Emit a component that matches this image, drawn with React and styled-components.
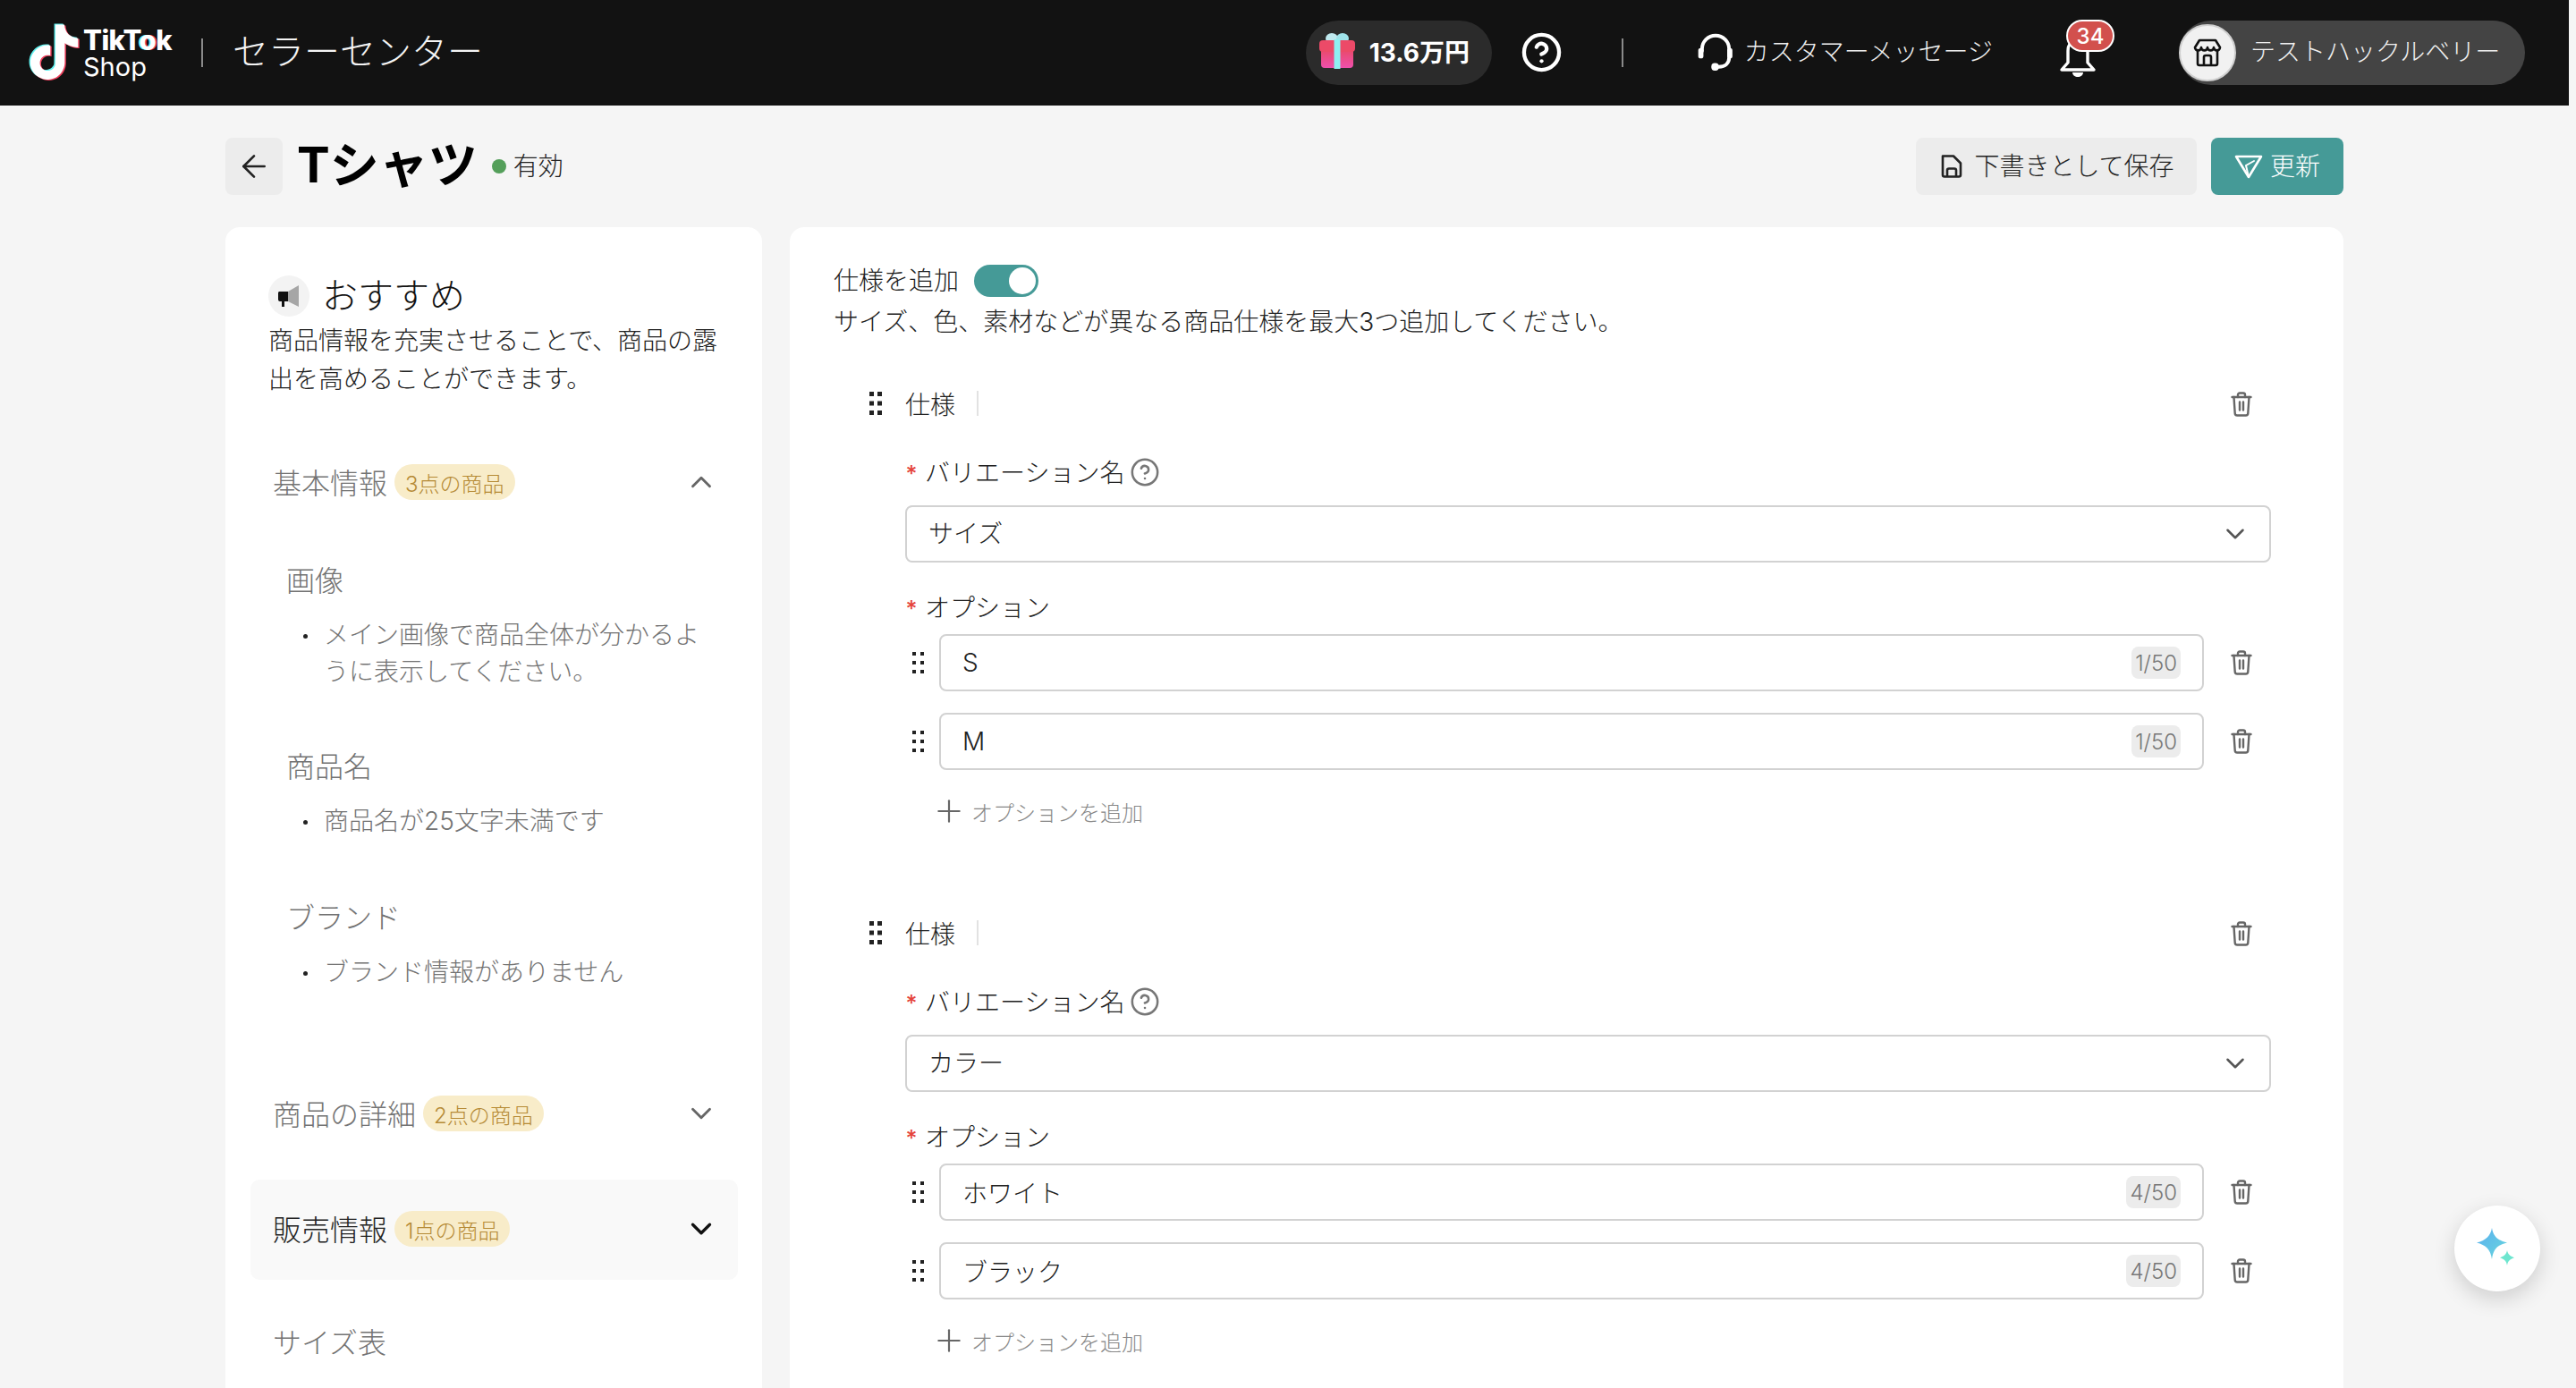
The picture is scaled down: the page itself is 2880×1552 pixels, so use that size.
import React from "react";
import styled, { createGlobalStyle } from "styled-components";
import { ArrowLeft, ChevronDown, ChevronUp, CircleHelp, Plus } from "lucide-react";

const Global = createGlobalStyle`
  html, body { margin: 0; padding: 0; background: #f5f5f5; overflow: hidden; }
  * { box-sizing: border-box; }
  body { font-family: Inter, "Noto Sans CJK JP", sans-serif; color: #222; }
`;

const Root = styled.div`
  position: relative;
  width: 2880px;
  height: 1552px;
  overflow: hidden;
  background: #f5f5f5;
`;

/* lifts fallback-font text up to the optical centre of its row */
const Lifted = styled.span`
  padding-bottom: ${(p) => p.$by}px;
`;

/* ---------- header ---------- */
const Header = styled.header`
  width: 2872px;
  height: 118px;
  background: #121212;
  color: #fff;
  display: flex;
  align-items: center;
  padding: 0 49px 0 28px;
`;
const Logo = styled.div`
  display: flex;
  align-items: center;
  gap: 1px;
`;
const LogoWords = styled.div`
  display: flex;
  flex-direction: column;
`;
const LogoTop = styled.span`
  font-size: 31px;
  font-weight: 800;
  letter-spacing: -0.6px;
  line-height: 31px;
`;
const LogoO = styled.span`
  text-shadow: -1.5px 0 #5ff0ee, 1.5px 0 #ee3f5c;
`;
const LogoBottom = styled.span`
  font-size: 29px;
  font-weight: 400;
  line-height: 30px;
`;
const VRule = styled.span`
  width: 2px;
  height: 32px;
  background: #8a8a8a;
  margin-left: ${(p) => p.$ml}px;
  flex: none;
`;
const CenterName = styled.span`
  font-size: 40px;
  font-weight: 300;
  margin-left: 33px;
  color: #f4f4f4;
  padding-bottom: 8px;
`;
const GiftPill = styled.div`
  margin-left: auto;
  width: 208px;
  height: 72px;
  border-radius: 36px;
  background: #2b2b2b;
  display: flex;
  align-items: center;
  padding: 0 0 5px 14px;
  gap: 15px;
  font-size: 28px;
  font-weight: 700;
`;
const HelpSlot = styled.div`
  margin: 0 0 2px 32px;
  display: flex;
  color: #fff;
`;
const Support = styled.div`
  margin-left: 80px;
  display: flex;
  align-items: center;
  gap: 10px;
  padding-bottom: 2px;
  font-size: 28px;
  font-weight: 300;
  color: #f0f0f0;
`;
const BellWrap = styled.div`
  position: relative;
  margin-left: 74px;
  margin-right: 92px;
  display: flex;
  padding-top: 8px;
`;
const BellBadge = styled.span`
  position: absolute;
  left: 8px;
  top: -9px;
  width: 54px;
  height: 36px;
  border-radius: 18px;
  border: 2px solid #fff;
  background: #d2504d;
  color: #fff;
  font-size: 24px;
  font-weight: 500;
  display: flex;
  align-items: center;
  justify-content: center;
`;
const ShopPill = styled.div`
  width: 387px;
  height: 72px;
  border-radius: 36px;
  background: #444;
  display: flex;
  align-items: center;
  gap: 16px;
  font-size: 28px;
  font-weight: 300;
  color: #f0f0f0;
`;
const ShopCircle = styled.span`
  width: 64px;
  height: 64px;
  border-radius: 50%;
  background: #f1f1f1;
  border: 2px solid #cfcfcf;
  display: flex;
  align-items: center;
  justify-content: center;
  flex: none;
`;

/* ---------- title bar ---------- */
const TitleBar = styled.div`
  margin: 36px 0 36px 252px;
  width: 2368px;
  height: 64px;
  display: flex;
  align-items: center;
`;
const BackBtn = styled.button`
  width: 64px;
  height: 64px;
  border: 0;
  border-radius: 8px;
  background: #ececec;
  color: #222;
  display: flex;
  align-items: center;
  justify-content: center;
  padding: 0;
`;
const Title = styled.h1`
  margin: 0 0 0 16px;
  font-size: 55px;
  font-weight: 700;
  color: #000;
  line-height: 60px;
  padding-bottom: 4px;
`;
const StatusDot = styled.span`
  width: 16px;
  height: 16px;
  border-radius: 50%;
  background: #549f5a;
  margin-left: 16px;
  margin-right: 8px;
`;
const StatusText = styled.span`
  font-size: 28px;
  font-weight: 300;
  color: #222;
  padding-bottom: 4px;
`;
const Actions = styled.div`
  margin-left: auto;
  display: flex;
  gap: 16px;
`;
const ActionBtn = styled.button`
  height: 64px;
  width: ${(p) => p.$w}px;
  border: 0;
  border-radius: 8px;
  background: ${(p) => (p.$primary ? "#459a97" : "#ececec")};
  color: ${(p) => (p.$primary ? "#fff" : "#222")};
  font-family: inherit;
  font-size: 28px;
  font-weight: 300;
  display: flex;
  align-items: center;
  justify-content: center;
  gap: ${(p) => (p.$primary ? 8 : 12)}px;
  padding: 0 0 0 ${(p) => (p.$primary ? 0 : 2)}px;
`;

/* ---------- panels ---------- */
const Columns = styled.div`
  margin-left: 252px;
  width: 2368px;
  display: grid;
  grid-template-columns: 600px 1737px;
  gap: 31px;
  align-items: start;
`;
const SidePanel = styled.aside`
  background: #fff;
  border-radius: 16px;
  height: 1400px;
  padding-top: 54px;
`;
const AdviceHead = styled.div`
  margin-left: 48px;
  height: 46px;
  display: flex;
  align-items: center;
  gap: 14px;
  font-size: 40px;
  font-weight: 300;
  color: #111;
`;
const MegaCircle = styled.span`
  width: 46px;
  height: 46px;
  border-radius: 50%;
  background: #f3f3f3;
  display: flex;
  align-items: center;
  justify-content: center;
`;
const AdviceText = styled.p`
  margin: 6px 0 38px 48px;
  width: 510px;
  font-size: 28px;
  line-height: 43px;
  font-weight: 300;
  color: #222;
`;
const AccRow = styled.div`
  margin: ${(p) => p.$mt || 0}px 27px 0 28px;
  height: 112px;
  padding: 0 22px 2px 25px;
  border-radius: 10px;
  background: ${(p) => (p.$active ? "#f9f9f9" : "transparent")};
  color: ${(p) => (p.$active ? "#222" : "#737373")};
  display: flex;
  align-items: center;
`;
const AccTitle = styled.span`
  font-size: 32px;
  font-weight: 300;
  padding-bottom: 2px;
`;
const CountTag = styled.span`
  margin-left: 8px;
  height: 40px;
  padding: 0 12px;
  border-radius: 20px;
  background: #f8ecc9;
  color: #b58a35;
  font-size: 24px;
  font-weight: 300;
  display: flex;
  align-items: center;
`;
const AccChevron = styled.span`
  margin-left: auto;
  display: flex;
  color: ${(p) => (p.$active ? "#111" : "#666")};
`;
const AdviceList = styled.div`
  margin: 32px 0 0 68px;
  width: 480px;
`;
const AdviceItem = styled.div`
  margin-bottom: ${(p) => p.$mb}px;
`;
const AdviceTitle = styled.div`
  font-size: 32px;
  line-height: 44px;
  font-weight: 300;
  color: #737373;
  margin-bottom: 18px;
`;
const AdviceBullet = styled.div`
  position: relative;
  padding-left: 42px;
  width: 470px;
  font-size: 28px;
  line-height: 41px;
  font-weight: 300;
  color: #737373;
  &::before {
    content: "";
    position: absolute;
    left: 19px;
    top: 19px;
    width: 5px;
    height: 5px;
    border-radius: 50%;
    background: #222;
  }
`;

const MainPanel = styled.main`
  background: #fff;
  border-radius: 16px 16px 0 0;
  height: 1400px;
  padding: 40px 81px 0 49px;
`;
const ToggleRow = styled.div`
  display: flex;
  align-items: center;
  gap: 17px;
  font-size: 28px;
  line-height: 40px;
  font-weight: 300;
  color: #222;
`;
const Toggle = styled.span`
  width: 72px;
  height: 36px;
  border-radius: 18px;
  background: #459a97;
  display: flex;
  align-items: center;
  justify-content: flex-end;
  padding-right: 3px;
  &::after {
    content: "";
    width: 30px;
    height: 30px;
    border-radius: 50%;
    background: #fff;
  }
`;
const Hint = styled.p`
  margin: 6px 0 0;
  font-size: 28px;
  line-height: 40px;
  font-weight: 300;
  color: #222;
`;
const SpecSection = styled.section`
  margin-top: ${(p) => p.$mt}px;
`;
const SpecHead = styled.div`
  height: 40px;
  display: flex;
  align-items: center;
  padding: 0 21px 0 40px;
  font-size: 28px;
  font-weight: 300;
  color: #222;
`;
const SpecName = styled.span`
  margin-left: 26px;
`;
const SpecRule = styled.span`
  width: 2px;
  height: 28px;
  background: #e2e2e2;
  margin-left: 24px;
`;
const PushRight = styled.span`
  margin-left: auto;
  display: flex;
  padding-top: 2px;
`;
const SpecBody = styled.div`
  margin-left: 80px;
`;
const FieldLabel = styled.div`
  margin-top: ${(p) => p.$mt}px;
  margin-bottom: ${(p) => p.$mb}px;
  height: 40px;
  display: flex;
  align-items: center;
  font-size: 28px;
  font-weight: 300;
  color: #222;
  gap: 8px;
`;
const Star = styled.span`
  color: #e5443a;
  font-size: 25px;
  font-weight: 500;
  width: 14px;
  text-align: center;
  margin-top: 4px;
`;
const SelectBox = styled.div`
  height: 64px;
  border: 2px solid #d2d2d2;
  border-radius: 8px;
  padding: 0 21px 0 24px;
  display: flex;
  align-items: center;
  justify-content: space-between;
  font-size: 28px;
  font-weight: 300;
  color: #222;
`;
const SelectChevron = styled.span`
  display: flex;
  color: #555;
`;
const OptionRow = styled.div`
  margin: ${(p) => p.$mt || 0}px 0 0 8px;
  padding-right: 21px;
  display: flex;
  align-items: center;
`;
const TextBox = styled.div`
  flex: 1;
  margin: 0 30px 0 17px;
  height: 64px;
  border: 2px solid #d2d2d2;
  border-radius: 8px;
  padding: 0 24px 0 24px;
  display: flex;
  align-items: center;
  justify-content: space-between;
  font-size: 28px;
  font-weight: 300;
  color: #222;
`;
const Counter = styled.span`
  height: 36px;
  padding: 0 4px;
  border-radius: 8px;
  background: #ececec;
  color: #777;
  font-size: 24px;
  font-weight: 300;
  display: flex;
  align-items: center;
`;
const AddOption = styled.div`
  margin: 26px 0 0 37px;
  height: 40px;
  display: flex;
  align-items: center;
  gap: 5px;
  font-size: 24px;
  font-weight: 300;
  color: #888;
`;
const PlusSlot = styled.span`
  display: flex;
  color: #666;
  margin-left: -8px;
`;
const Float = styled.button`
  position: absolute;
  right: 40px;
  bottom: 108px;
  width: 96px;
  height: 96px;
  border: 0;
  border-radius: 50%;
  background: #fff;
  box-shadow: 0 8px 24px rgba(0, 0, 0, 0.16);
  padding: 0;
  display: flex;
  align-items: center;
  justify-content: center;
`;

/* ---------- drawings ---------- */
const NOTE =
  "M12.525.02c1.31-.02 2.61-.01 3.91-.02.08 1.53.63 3.09 1.75 4.17 1.12 1.11 2.7 1.62 4.24 1.79v4.03c-1.44-.05-2.89-.35-4.2-.97-.57-.26-1.1-.59-1.62-.93-.01 2.92.01 5.84-.02 8.75-.08 1.4-.54 2.79-1.35 3.94-1.31 1.92-3.58 3.17-5.91 3.21-1.43.08-2.86-.31-4.08-1.03-2.02-1.19-3.44-3.37-3.65-5.71-.02-.5-.03-1-.01-1.49.18-1.9 1.12-3.72 2.58-4.96 1.66-1.44 3.98-2.13 6.15-1.72.02 1.48-.04 2.96-.04 4.44-.99-.32-2.15-.23-3.02.37-.63.41-1.11 1.04-1.36 1.75-.21.51-.15 1.07-.14 1.61.24 1.64 1.82 3.02 3.5 2.87 1.12-.01 2.19-.66 2.77-1.61.19-.33.4-.67.41-1.06.1-1.79.06-3.57.07-5.36.01-4.03-.01-8.05.02-12.07z";

const LogoNote = () => (
  <svg width="64" height="66" viewBox="0 0 25 25.800">
    <path d={NOTE} transform="translate(.2 .2)" fill="#5ff0ee" />
    <path d={NOTE} transform="translate(1.3 1)" fill="#ee3f5c" />
    <path d={NOTE} transform="translate(.75 .6)" fill="#fff" />
  </svg>
);
const GiftIcon = () => (
  <svg width="42" height="42" viewBox="0 0 42 42">
    <defs>
      <linearGradient id="giftBox" x1="0" y1="0" x2="0" y2="1">
        <stop offset="0" stopColor="#e8485f" />
        <stop offset="1" stopColor="#ee50ad" />
      </linearGradient>
    </defs>
    <ellipse cx="15" cy="7" rx="7" ry="6" fill="#bfe9ef" />
    <ellipse cx="27" cy="7" rx="7" ry="6" fill="#9fe3ea" />
    <rect x="3" y="16" width="36" height="24" rx="4" fill="url(#giftBox)" />
    <rect x="1" y="9" width="40" height="13" rx="4" fill="#ec4a68" />
    <rect x="17.500" y="8" width="7" height="33" fill="#8ef0f2" />
  </svg>
);
const Headset = () => (
  <svg width="45" height="46" viewBox="0 0 40 44" fill="none" stroke="#fff" strokeWidth="3.8" strokeLinecap="round">
    <path d="M6 21v-2a14.500 14.500 0 0 1 29 0v9c0 6-4 10-11 10h-3" />
    <rect x="2" y="18" width="5.500" height="11" rx="2.500" fill="#fff" stroke="none" />
    <rect x="33" y="18" width="5.500" height="11" rx="2.500" fill="#fff" stroke="none" />
    <rect x="16" y="34" width="8" height="8" rx="3.500" fill="#fff" stroke="none" />
  </svg>
);
const Bell = () => (
  <svg width="42" height="48" viewBox="0 0 42 48" fill="none" stroke="#fff" strokeWidth="3.4" strokeLinejoin="round">
    <path d="M21 6c-7 0-11 5-11 12v13l-7 8h36l-7-8V18c0-7-4-12-11-12z" />
    <path d="M15 42h12c0 3-3 5-6 5s-6-2-6-5z" fill="#fff" stroke="none" />
  </svg>
);
const StoreIcon = () => (
  <svg width="32" height="32" viewBox="0 0 32 32" fill="none" stroke="#111" strokeWidth="2.600" strokeLinejoin="round">
    <path d="M7 2h18l5 8c0 2-1.600 3.400-3.500 3.400S23 12 23 10c0 2-1.600 3.400-3.500 3.400S16 12 16 10c0 2-1.600 3.400-3.500 3.400S9 12 9 10c0 2-1.600 3.400-3.500 3.400S2 12 2 10z" />
    <path d="M5 14v14a2 2 0 0 0 2 2h18a2 2 0 0 0 2-2V14" />
    <path d="M12 30v-9a2 2 0 0 1 2-2h4a2 2 0 0 1 2 2v9" />
  </svg>
);
const SaveIcon = () => (
  <svg width="26" height="28" viewBox="0 0 26 28" fill="none" stroke="#222" strokeWidth="2.600" strokeLinejoin="round">
    <path d="M3 2.500h12l8 8v13a2 2 0 0 1-2 2H5a2 2 0 0 1-2-2z" />
    <path d="M8 25.500v-7a2 2 0 0 1 2-2h6a2 2 0 0 1 2 2v7" />
  </svg>
);
const SendIcon = () => (
  <svg width="32" height="28" viewBox="0 0 32 28" fill="none" stroke="#fff" strokeWidth="2.600" strokeLinejoin="round" strokeLinecap="round">
    <path d="M2 3h28L16 26z" />
    <path d="M13 13l9-5M13 13l3 13" strokeWidth="2" />
  </svg>
);
const Megaphone = () => (
  <svg width="26" height="28" viewBox="0 0 26 28">
    <path d="M12 9l12-7v24l-12-6z" fill="#a6a6a6" />
    <path d="M2 9h10v11H8v6H5v-6H3a2 2 0 0 1-2-2v-7a2 2 0 0 1 1-2z" fill="#111" />
  </svg>
);
const Dots = ({ big }) => {
  const s = big ? 5 : 4;
  const w = big ? 14 : 13;
  const h = big ? 26 : 24;
  return (
    <svg width={w} height={h} viewBox={`0 0 ${w} ${h}`} fill="#222" style={{ flex: "none" }}>
      {[0, (h - s) / 2, h - s].map((y) => (
        <g key={y}>
          <rect x="0" y={y} width={s} height={s} />
          <rect x={w - s} y={y} width={s} height={s} />
        </g>
      ))}
    </svg>
  );
};
const Trash = () => (
  <svg width="24" height="28" viewBox="0 0 24 28" fill="none" stroke="#666" strokeWidth="2.400" strokeLinecap="round" strokeLinejoin="round" style={{ flex: "none" }}>
    <path d="M1.500 6h21" />
    <path d="M8 6V3.500A2 2 0 0 1 10 1.500h4a2 2 0 0 1 2 2V6" />
    <path d="M3.500 6l1.200 18a2.500 2.500 0 0 0 2.500 2.500h9.600a2.500 2.500 0 0 0 2.500-2.500L20.500 6" />
    <path d="M10 11.500v9M14 11.500v9" />
  </svg>
);
const Sparkle = () => (
  <svg width="48" height="48" viewBox="0 0 48 48">
    <defs>
      <linearGradient id="spark" x1="0" y1="0" x2="1" y2="1">
        <stop offset="0" stopColor="#5aaef0" />
        <stop offset="1" stopColor="#68d8dc" />
      </linearGradient>
    </defs>
    <path d="M18 1c1.500 9 6 14 17 16.500C24 20 19.500 25 18 36 16.500 25 11 20 1 17.500 11 15 16.500 10 18 1z" fill="url(#spark)" />
    <path d="M35 26c.8 4 3 6.500 8 8.300-5 1.700-7.200 4-8 8.700-.8-4.700-3-7-8-8.700 5-1.800 7.200-4.300 8-8.300z" fill="#6ee6cf" />
  </svg>
);

/* ---------- data ---------- */
const specs = [
  { name: "サイズ", mt: 51, options: [["S", "1/50"], ["M", "1/50"]] },
  { name: "カラー", mt: 96, options: [["ホワイト", "4/50"], ["ブラック", "4/50"]] },
];

const Spec = ({ spec }) => (
  <SpecSection $mt={spec.mt}>
    <SpecHead>
      <Dots big />
      <SpecName>仕様</SpecName>
      <SpecRule />
      <PushRight>
        <Trash />
      </PushRight>
    </SpecHead>
    <SpecBody>
      <FieldLabel $mt={37} $mb={17}>
        <Star>*</Star>
        <Lifted $by={3}>バリエーション名</Lifted>
        <CircleHelp size={34} strokeWidth={1.8} color="#777" style={{ marginLeft: -2 }} />
      </FieldLabel>
      <SelectBox>
        <Lifted $by={5}>{spec.name}</Lifted>
        <SelectChevron>
          <ChevronDown size={34} strokeWidth={1.8} />
        </SelectChevron>
      </SelectBox>
      <FieldLabel $mt={30} $mb={10}>
        <Star>*</Star>
        <Lifted $by={3}>オプション</Lifted>
      </FieldLabel>
      {spec.options.map(([value, count], i) => (
        <OptionRow key={value} $mt={i ? 24 : 0}>
          <Dots />
          <TextBox>
            <span>{value}</span>
            <Counter>{count}</Counter>
          </TextBox>
          <Trash />
        </OptionRow>
      ))}
      <AddOption>
        <PlusSlot>
          <Plus size={40} strokeWidth={1.3} />
        </PlusSlot>
        オプションを追加
      </AddOption>
    </SpecBody>
  </SpecSection>
);

export default function App() {
  return (
    <Root>
      <Global />
      <Header>
        <Logo>
          <LogoNote />
          <LogoWords>
            <LogoTop>
              TikT<LogoO>o</LogoO>k
            </LogoTop>
            <LogoBottom>Shop</LogoBottom>
          </LogoWords>
        </Logo>
        <VRule $ml={33} />
        <CenterName>セラーセンター</CenterName>
        <GiftPill>
          <GiftIcon />
          13.6万円
        </GiftPill>
        <HelpSlot>
          <CircleHelp size={47} strokeWidth={2.2} />
        </HelpSlot>
        <VRule $ml={66} />
        <Support>
          <Headset />
          <Lifted $by={5}>カスタマーメッセージ</Lifted>
        </Support>
        <BellWrap>
          <Bell />
          <BellBadge>34</BellBadge>
        </BellWrap>
        <ShopPill>
          <ShopCircle>
            <StoreIcon />
          </ShopCircle>
          <Lifted $by={6}>テストハックルベリー</Lifted>
        </ShopPill>
      </Header>

      <TitleBar>
        <BackBtn aria-label="戻る">
          <ArrowLeft size={40} strokeWidth={1.6} />
        </BackBtn>
        <Title>Tシャツ</Title>
        <StatusDot />
        <StatusText>有効</StatusText>
        <Actions>
          <ActionBtn $w={314}>
            <SaveIcon />
            <Lifted $by={4}>下書きとして保存</Lifted>
          </ActionBtn>
          <ActionBtn $w={148} $primary>
            <SendIcon />
            <Lifted $by={4}>更新</Lifted>
          </ActionBtn>
        </Actions>
      </TitleBar>

      <Columns>
        <SidePanel>
          <AdviceHead>
            <MegaCircle>
              <Megaphone />
            </MegaCircle>
            <Lifted $by={6}>おすすめ</Lifted>
          </AdviceHead>
          <AdviceText>商品情報を充実させることで、商品の露出を高めることができます。</AdviceText>

          <AccRow>
            <AccTitle>基本情報</AccTitle>
            <CountTag>3点の商品</CountTag>
            <AccChevron>
              <ChevronUp size={38} strokeWidth={1.8} />
            </AccChevron>
          </AccRow>
          <AdviceList>
            <AdviceItem $mb={64}>
              <AdviceTitle>画像</AdviceTitle>
              <AdviceBullet>メイン画像で商品全体が分かるように表示してください。</AdviceBullet>
            </AdviceItem>
            <AdviceItem $mb={66}>
              <AdviceTitle>商品名</AdviceTitle>
              <AdviceBullet>商品名が25文字未満です</AdviceBullet>
            </AdviceItem>
            <AdviceItem $mb={0}>
              <AdviceTitle>ブランド</AdviceTitle>
              <AdviceBullet>ブランド情報がありません</AdviceBullet>
            </AdviceItem>
          </AdviceList>
          <AccRow $mt={82}>
            <AccTitle>商品の詳細</AccTitle>
            <CountTag>2点の商品</CountTag>
            <AccChevron>
              <ChevronDown size={38} strokeWidth={1.8} />
            </AccChevron>
          </AccRow>
          <AccRow $mt={17} $active>
            <AccTitle>販売情報</AccTitle>
            <CountTag>1点の商品</CountTag>
            <AccChevron $active>
              <ChevronDown size={38} strokeWidth={2.1} />
            </AccChevron>
          </AccRow>
          <AccRow $mt={14}>
            <AccTitle>サイズ表</AccTitle>
          </AccRow>
        </SidePanel>

        <MainPanel>
          <ToggleRow>
            仕様を追加
            <Toggle />
          </ToggleRow>
          <Hint>サイズ、色、素材などが異なる商品仕様を最大3つ追加してください。</Hint>
          {specs.map((s) => (
            <Spec key={s.name} spec={s} />
          ))}
        </MainPanel>
      </Columns>

      <Float aria-label="AI">
        <Sparkle />
      </Float>
    </Root>
  );
}
